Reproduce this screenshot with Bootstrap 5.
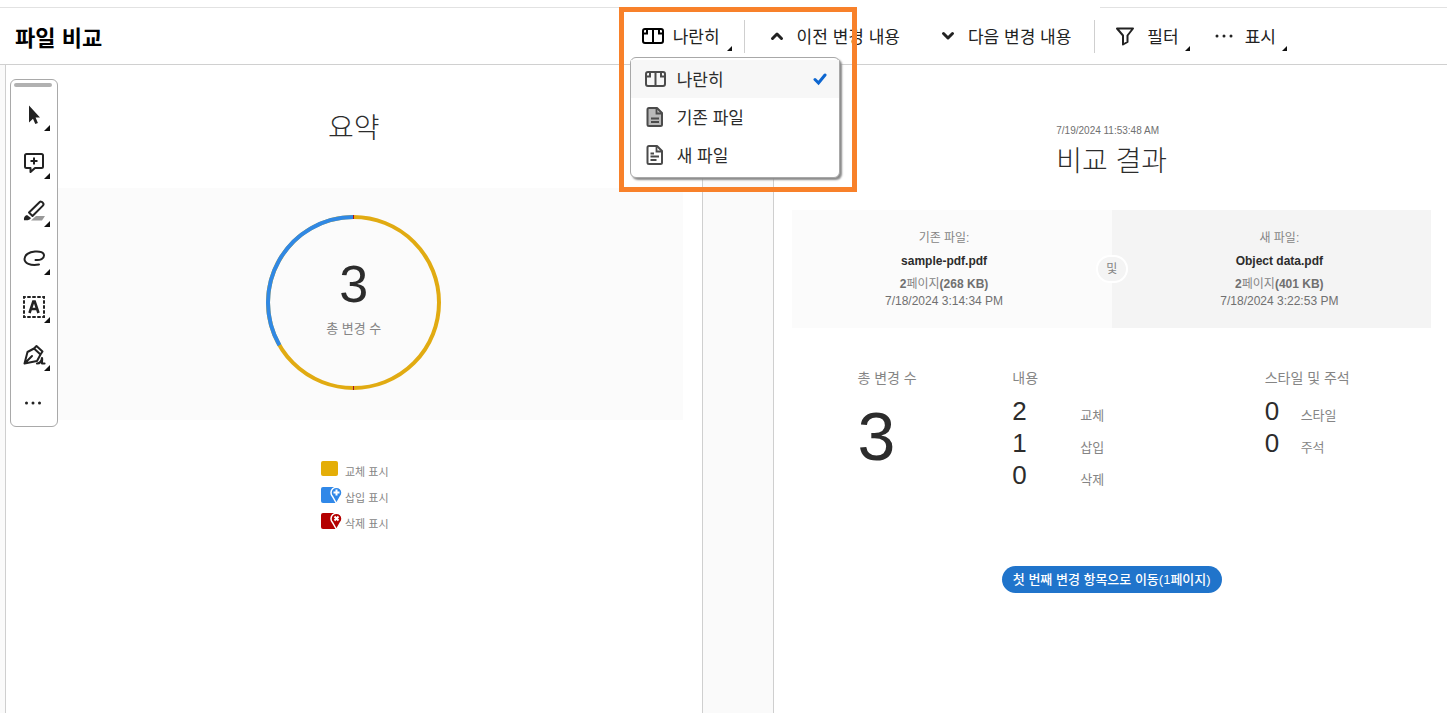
<!DOCTYPE html>
<html lang="ko">
<head>
<meta charset="utf-8">
<meta name="viewport" content="width=device-width, initial-scale=1">
<title>파일 비교</title>
<link href="https://cdn.jsdelivr.net/npm/bootstrap@5.3.0/dist/css/bootstrap.min.css" rel="stylesheet">
<script src="https://cdn.jsdelivr.net/npm/bootstrap@5.3.0/dist/js/bootstrap.bundle.min.js"></script>
<style>
  body { font-family: "Liberation Sans", "Noto Sans CJK KR", sans-serif; color: #2c2c2c; background: #fff; font-size: 14px; line-height: 16px; }
  .ui-font { font-family: "Noto Sans CJK KR", sans-serif; }
  svg { display: block; flex: none; }

  .top-rule { height: 8px; }
  .top-rule span { border-bottom: 1px solid #e2e2e2; }
  .rule-a { flex: 0 0 59%; }
  .rule-b { flex: 0 0 24%; }
  .app-bar { height: 57px; border-bottom: 1px solid #d0d0d0; }
  .app-title { flex: 0 0 44%; padding-left: 15px; font-size: 22px; line-height: 32px; font-weight: 700; color: #000; margin: 0; }
  .tool-btn { display: flex; align-items: center; height: 36px; padding: 0 4px; border: 0; border-radius: 4px; background: none; color: #222; font-size: 17px; line-height: 24px; white-space: nowrap; gap: 8px; font-weight: 400; }
  .tool-btn.wide { gap: 12px; padding: 0 8px; }
  .corner { position: relative; }
  .corner::after { content: ""; position: absolute; right: 0; bottom: 3px; border-left: 5px solid transparent; border-bottom: 5px solid #111; }
  .tool-sep { width: 1px; height: 33px; background: #cfcfcf; }
  .sep-first { margin: 0 16px 0 12px; }
  .sep-next { margin: 0 12px 0 15px; }
  .more-btn { margin-left: 17px; }
  .tool-btn.roomy { padding-right: 11px; }

  .mode-menu { position: absolute; left: -7px; top: 39px; width: 210px; padding: 2px 0 3px; background: #fff; border: 1px solid #a8a8a8; border-radius: 6px; box-shadow: 2px 2px 2px #8a8a8a; z-index: 20; }
  .mode-menu button { display: flex; align-items: center; width: 100%; height: 38px; padding: 0 12px 0 13px; border: 0; background: none; color: #2c2c2c; font-size: 17px; line-height: 24px; gap: 10px; font-weight: 400; }
  .mode-menu button.chosen { background: #f7f7f7; }
  .focus-frame { position: absolute; left: -18px; top: -11px; width: 238px; height: 185px; border: 5px solid #f8812a; z-index: 30; pointer-events: none; }

  .workspace { background: #fafafa; min-height: calc(100vh - 65px); padding-left: 5px; }
  .sheet { background: #fff; border-left: 1px solid #cfcfcf; position: relative; flex-basis: 0; min-width: 0; }
  .sheet-old { flex-grow: 697; border-right: 1px solid #cfcfcf; }
  .sheet-new { flex-grow: 674; }
  .sheet-body { padding: 60px 16px 24px 18px; }
  .gutter { flex: 71 0 0; }

  .palette { position: absolute; left: 4px; top: 14px; width: 48px; height: 348px; border: 1px solid #a9a9a9; border-radius: 6px; background: #fff; padding: 3px 3px 0; }
  .grip { height: 4px; width: 38px; border-radius: 2px; background: #b1b1b1; margin-bottom: 4px; }
  .palette button { display: flex; align-items: center; justify-content: center; width: 40px; height: 48px; border: 0; background: none; padding: 0; position: relative; }
  .palette button.corner::after { border-left-width: 6px; border-bottom-width: 6px; right: 4px; bottom: 8px; }

  .doc-title { font-size: 28px; line-height: 36px; font-weight: 300; margin: 0; color: #2c2c2c; }
  .soft { color: #858585; font-weight: 400; }
  .summary-head { padding-top: 46px; height: 123px; }
  .summary-band { background: #fbfbfb; margin: 0 19px; height: 232px; padding-top: 26px; }
  .ring { width: 177px; height: 177px; position: relative; }
  .ring-label { position: absolute; inset: 0; padding-top: 42px; text-align: center; }
  .ring-num { font-size: 52px; line-height: 56px; color: #2c2c2c; }
  .f13 { font-size: 13px; line-height: 18px; }
  .legend { margin-top: 36px; padding-left: 2px; }
  .legend li { height: 26px; display: flex; align-items: center; gap: 2px; font-size: 11px; line-height: 16px; }
  .legend li span { padding-top: 6px; }

  .stamp { font-size: 10px; line-height: 12px; color: #707070; }
  .main-title { margin-top: 7px; }
  .file-pair { margin-top: 30px; }
  .file-cell { flex: 1 1 0; height: 118px; padding-top: 20px; font-size: 12px; line-height: 17px; color: #707070; background: #fbfbfb; }
  .file-note { padding-right: 16px; }
  .newer .file-note { padding-right: 0; padding-left: 16px; }
  .file-cell.newer { background: #f4f4f4; }
  .file-cell .fname { color: #2c2c2c; font-weight: 700; margin: 6px 0; }
  .joiner { position: absolute; left: 50%; top: 50%; width: 32px; height: 28px; transform: translate(-50%, -50%); border: 2px solid #fff; border-radius: 14px; background: #f4f4f4; line-height: 24px; font-size: 12px; text-align: center; }
  .stats { display: grid; grid-template-columns: 27% 44% 1fr; padding-left: 65px; margin-top: 41px; }
  .stats h2 { font-size: 14px; line-height: 18px; margin: 0 0 9px; }
  .big-num { font-size: 68px; line-height: 68px; margin-top: 15px; color: #2c2c2c; }
  .stat-row { display: flex; align-items: baseline; height: 32px; }
  .stat-row b { font-weight: 400; font-size: 26px; line-height: 30px; color: #2c2c2c; width: 68px; }
  .stat-row.near b { width: 36px; }
  .go-btn { background: #2074cb; color: #fff; border: 0; border-radius: 14px; height: 27px; padding: 0 11px; font-size: 13px; line-height: 20px; font-weight: 500; margin-top: 74px; }
</style>
</head>
<body>
<div class="top-rule d-flex"><span class="rule-a"></span><span class="border-0 flex-fill"></span><span class="rule-b"></span></div>
<header class="app-bar d-flex align-items-center ui-font">
  <h1 class="app-title">파일 비교</h1>
  <nav class="d-flex align-items-center" aria-label="비교 도구">
    <div class="position-relative">
      <button type="button" class="tool-btn corner pe-2" aria-expanded="true">
        <svg width="24" height="20" viewBox="0 0 24 20" fill="none" stroke="#000" stroke-width="2"><rect x="2" y="3" width="20" height="14" rx="2"/><path d="M12 3v14M2.500 7.500H6V3M21.500 7.500H18V3"/></svg>
        <span class="pe-1">나란히</span>
      </button>
      <div class="mode-menu" role="menu">
        <button type="button" role="menuitem" class="chosen">
          <svg width="23" height="20" viewBox="0 0 23 20" fill="none" stroke="#4b4b4b" stroke-width="2"><rect x="2" y="3" width="19" height="14" rx="2"/><path d="M11.500 3v14M2.500 7.500H6V3M20.500 7.500H17V3"/></svg>
          <span>나란히</span>
          <svg class="ms-auto" width="14" height="14" viewBox="0 0 14 14" fill="none" stroke="#0d66d0" stroke-width="3"><path d="M2 7.500l3.500 3.500L12 3" stroke-linecap="round"/></svg>
        </button>
        <button type="button" role="menuitem">
          <svg width="23" height="22" viewBox="0 0 23 22" fill="#b9b9b9" stroke="#4b4b4b" stroke-width="2"><path d="M5 2h8l5 5v11.500a1.500 1.500 0 0 1-1.500 1.500H5a1.500 1.500 0 0 1-1.500-1.500v-15A1.500 1.500 0 0 1 5 2z" stroke-linejoin="round"/><path d="M12.500 2v5.500H18M7 12.500h8M7 16h8" fill="none" stroke-width="1.800"/></svg>
          <span>기존 파일</span>
        </button>
        <button type="button" role="menuitem">
          <svg width="23" height="22" viewBox="0 0 23 22" fill="none" stroke="#4b4b4b" stroke-width="2"><path d="M5 2h8l5 5v11.500a1.500 1.500 0 0 1-1.500 1.500H5a1.500 1.500 0 0 1-1.500-1.500v-15A1.500 1.500 0 0 1 5 2z" stroke-linejoin="round"/><path d="M12.500 2v5.500H18M6.500 9.500h3.500M6.500 12.500h8.500M6.500 16h6" stroke-width="1.800"/></svg>
          <span>새 파일</span>
        </button>
      </div>
      <div class="focus-frame"></div>
    </div>
    <span class="tool-sep sep-first"></span>
    <button type="button" class="tool-btn wide">
      <svg width="16" height="12" viewBox="0 0 16 12" fill="none" stroke="#222" stroke-width="3"><path d="M3.500 8.500L8 4l4.500 4.500" stroke-linecap="round" stroke-linejoin="round"/></svg>
      <span>이전 변경 내용</span>
    </button>
    <button type="button" class="tool-btn wide ms-4">
      <svg width="16" height="12" viewBox="0 0 16 12" fill="none" stroke="#222" stroke-width="3"><path d="M3.500 3.500L8 8l4.500-4.500" stroke-linecap="round" stroke-linejoin="round"/></svg>
      <span>다음 변경 내용</span>
    </button>
    <span class="tool-sep sep-next"></span>
    <button type="button" class="tool-btn wide roomy corner">
      <svg width="20" height="20" viewBox="0 0 20 20" fill="none" stroke="#222" stroke-width="2"><path d="M2 2.500h16l-5.500 7V16L8 18.500v-9z" stroke-linejoin="round"/></svg>
      <span>필터</span>
    </button>
    <button type="button" class="tool-btn wide roomy corner more-btn">
      <svg width="18" height="4" viewBox="0 0 18 4" fill="#222"><circle cx="2" cy="2" r="1.500"/><circle cx="9" cy="2" r="1.500"/><circle cx="16" cy="2" r="1.500"/></svg>
      <span>표시</span>
    </button>
  </nav>
</header>

<main class="workspace d-flex">
  <section class="sheet sheet-old">
    <div class="summary-head text-center"><h2 class="doc-title">요약</h2></div>
    <div class="summary-band">
      <div class="ring mx-auto">
        <svg width="177" height="177" viewBox="-88.500 -88.500 177 177" fill="none" stroke-width="4">
          <circle r="85.500" stroke="#e1ab12"/>
          <path d="M-74.050 42.750A85.500 85.500 0 0 1 0-85.500" stroke="#3088e4"/>
          <path d="M0-87.500v4M0 83.500v4" stroke="#a5122a" stroke-width="1"/>
        </svg>
        <div class="ring-label">
          <div class="ring-num">3</div>
          <div class="soft f13 mt-2">총 변경 수</div>
        </div>
      </div>
    </div>
    <div class="d-flex justify-content-center">
      <ul class="legend list-unstyled soft mb-0">
        <li><svg width="22" height="18" viewBox="0 0 22 18"><rect y="1" width="17" height="15" rx="2" fill="#e4ae08"/></svg><span>교체 표시</span></li>
        <li><svg width="22" height="18" viewBox="0 0 22 18"><rect y="1" width="17" height="16" rx="2" fill="#3088e8"/><path d="M15.500 17.500l-4-7a5.500 5.500 0 1 1 8 0z" fill="#3088e8" stroke="#fff" stroke-width="1.500"/><path d="M15.500 3.500v6M12.500 6.500h6" stroke="#fff" stroke-width="2"/></svg><span>삽입 표시</span></li>
        <li><svg width="22" height="18" viewBox="0 0 22 18"><rect y="1" width="17" height="16" rx="2" fill="#b40000"/><path d="M15.500 17.500l-4-7a5.500 5.500 0 1 1 8 0z" fill="#b40000" stroke="#fff" stroke-width="1.500"/><path d="M13.500 4.500l4 4M17.500 4.500l-4 4" stroke="#fff" stroke-width="2"/></svg><span>삭제 표시</span></li>
      </ul>
    </div>

    <div class="palette" role="toolbar" aria-label="도구">
      <div class="grip"></div>
      <button type="button" class="corner" aria-label="선택"><svg width="24" height="24" viewBox="0 0 24 24" fill="#222"><path d="M7 2.500v17l4-3.800 2.300 5.300 2.600-1-2.300-5.500H18z"/></svg></button>
      <button type="button" class="corner" aria-label="주석 추가"><svg width="24" height="24" viewBox="0 0 24 24" fill="none" stroke="#222" stroke-width="2" stroke-linejoin="round"><path d="M4.500 3h15A1.500 1.500 0 0 1 21 4.500v11a1.500 1.500 0 0 1-1.500 1.500H13l-4.500 4v-4h-4A1.500 1.500 0 0 1 3 15.500v-11A1.500 1.500 0 0 1 4.500 3zM12 6.500v7M8.500 10h7"/></svg></button>
      <button type="button" class="corner" aria-label="강조 표시"><svg width="24" height="24" viewBox="0 0 24 24"><path d="M14 17h9l-3 4.500H9z" fill="#999"/><path d="M7 13.500L17.500 3.300c1-1 2-.8 2.800 0l.6.600c.8.900.8 1.900 0 2.700L10.500 17z" fill="none" stroke="#222" stroke-width="2" stroke-linejoin="round"/><path d="M5 16l4 3c-1.500 2.500-4 2.500-7 2.200C1.500 19 2.500 16.500 5 16z" fill="#222"/></svg></button>
      <button type="button" class="corner" aria-label="그리기"><svg width="24" height="24" viewBox="0 0 24 24" fill="none" stroke="#222" stroke-width="2" stroke-linecap="round"><path d="M13.500 13c5 .5 8.500-1.500 8.500-4.500C22 5.500 18 4 13 4.500 7 5 2.500 8 2.500 12c0 4 5.500 7 14.500 5.500"/></svg></button>
      <button type="button" class="corner" aria-label="텍스트 상자"><svg width="24" height="24" viewBox="0 0 24 24"><rect x="2" y="2" width="20" height="20" fill="none" stroke="#222" stroke-width="2" stroke-dasharray="3.500 1.500" stroke-dashoffset="1.750"/><path d="M7.500 18L11.300 6.500h1.400L16.500 18M9 14h6" fill="none" stroke="#222" stroke-width="2.600"/></svg></button>
      <button type="button" class="corner" aria-label="서명"><svg width="24" height="24" viewBox="0 0 24 24" fill="none" stroke="#222" stroke-width="2" stroke-linejoin="round" stroke-linecap="round"><path d="M2.500 20.500L5.500 9 12 5.500l6.500 6-3.500 6.500zM2.500 20.500L10 13M12 5.500L14.500 3l6 5.500-2 3"/><path d="M15 20.500c3 0 5-3 5-5.500.5 2-.5 4 0 5.500h2.500" stroke-width="2.200"/></svg></button>
      <button type="button" aria-label="더 보기"><svg width="18" height="4" viewBox="0 0 18 4" fill="#222"><circle cx="1.500" cy="2" r="1.500"/><circle cx="8" cy="2" r="1.500"/><circle cx="14.500" cy="2" r="1.500"/></svg></button>
    </div>
  </section>

  <div class="gutter"></div>

  <section class="sheet sheet-new">
    <div class="sheet-body">
      <div class="d-flex justify-content-center">
        <div><div class="stamp">7/19/2024 11:53:48 AM</div><h2 class="doc-title main-title">비교 결과</h2></div>
      </div>
      <div class="file-pair d-flex position-relative text-center">
        <div class="file-cell">
          <div class="file-note">
            <div class="soft">기존 파일:</div>
            <div class="fname">sample-pdf.pdf</div>
            <div><b>2</b><span class="soft">페이지</span><b>(268 KB)</b></div>
            <div>7/18/2024 3:14:34 PM</div>
          </div>
        </div>
        <div class="file-cell newer">
          <div class="file-note">
            <div class="soft">새 파일:</div>
            <div class="fname">Object data.pdf</div>
            <div><b>2</b><span class="soft">페이지</span><b>(401 KB)</b></div>
            <div>7/18/2024 3:22:53 PM</div>
          </div>
        </div>
        <span class="joiner soft">및</span>
      </div>
      <div class="stats">
        <div><h2 class="soft">총 변경 수</h2><div class="big-num">3</div></div>
        <div>
          <h2 class="soft">내용</h2>
          <div class="stat-row"><b>2</b><span class="soft f13">교체</span></div>
          <div class="stat-row"><b>1</b><span class="soft f13">삽입</span></div>
          <div class="stat-row"><b>0</b><span class="soft f13">삭제</span></div>
        </div>
        <div>
          <h2 class="soft">스타일 및 주석</h2>
          <div class="stat-row near"><b>0</b><span class="soft f13">스타일</span></div>
          <div class="stat-row near"><b>0</b><span class="soft f13">주석</span></div>
        </div>
      </div>
      <div class="text-center"><button type="button" class="go-btn">첫 번째 변경 항목으로 이동(1페이지)</button></div>
    </div>
  </section>
</main>
</body>
</html>
